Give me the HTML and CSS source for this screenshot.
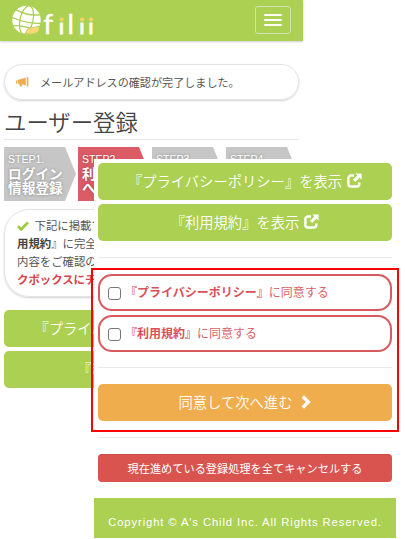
FILE: index.html
```html
<!DOCTYPE html>
<html lang="ja">
<head>
    <meta charset="UTF-8">
    <meta name="viewport" content="width=device-width, initial-scale=1.0">
    <title>ユーザー登録</title>
    <link rel="stylesheet" href="styles.css">
</head>
<body>
<!-- Shared icons -->
<svg class="icon-defs" width="0" height="0">
    <symbol id="icon-open" viewBox="0 0 16 16">
        <path d="M7.5 2.7H4.2A2.7 2.7 0 0 0 1.5 5.4v6.2a2.7 2.7 0 0 0 2.7 2.7h6.2a2.7 2.7 0 0 0 2.7-2.7V10" fill="none" stroke="currentColor" stroke-width="2.6"/>
        <path d="M8.8.4h6.8v6.8l-2.2-2.2-4.7 4.7-2.4-2.4L11 2.6z" fill="currentColor"/>
    </symbol>
</svg>

<div class="page">
    <header class="navbar">
        <svg class="logo" width="100" height="40" viewBox="0 0 100 40">
            <linearGradient id="dot" gradientUnits="userSpaceOnUse" x1="0" y1="0" x2="0" y2="40">
                <stop offset="0.54" stop-color="#fbd46d"/>
                <stop offset="0.54" stop-color="#fff"/>
            </linearGradient>
            <circle cx="26.500" cy="20" r="14.200" fill="#fff"/>
            <g fill="none" stroke="#abd052" stroke-width="1.3" transform="rotate(12 26.500 20)">
                <ellipse cx="26.500" cy="20" rx="6.500" ry="14.500"/>
                <path d="M14 12q12.500 4 25 0M12 20.500q14.500 3 29 0M14 28.500q12.500-3 25 0"/>
            </g>
            <path d="M25.500 33.200q1.500-5.500 7-5.700 3.500-.2 6-1.500 2.500 5-2.500 7.200-4.500 2-10.500 0z" fill="#fbd777" stroke="#abd052" stroke-width="0.8"/>
            <text class="logo-text" y="34"><tspan x="43.500">f</tspan><tspan class="dotted" x="58.800">i</tspan><tspan x="67.500">l</tspan><tspan class="dotted" x="79.300">i</tspan><tspan class="dotted" x="88.300">i</tspan></text>
        </svg>
        <button class="menu-button" aria-label="menu">
            <span></span>
            <span></span>
            <span></span>
        </button>
    </header>

    <main class="content">
        <div class="notice">
            <svg width="13" height="10" viewBox="0 0 13 10" fill="#f0ad4e">
                <path d="M0 3.500h1.200v3H0zM1.800 3 9.800.6v8L5.600 7.300l.6 2.200H4L3.200 6.800l-1.400-.3zM10.800 0h1.600v9.500h-1.600z"/>
            </svg>
            <span>メールアドレスの確認が完了しました。</span>
        </div>

        <h1>ユーザー登録</h1>

        <div class="steps">
            <div class="step"><small>STEP1.</small>ログイン<br>情報登録</div>
            <div class="step active"><small>STEP2.</small>利<br>へ</div>
            <div class="step"><small>STEP3</small></div>
            <div class="step"><small>STEP4</small></div>
        </div>

        <div class="guide">
            <svg width="12" height="10" viewBox="0 0 12 10">
                <path d="M1 5.200 4.300 8.400 11 1.400" fill="none" stroke="#9ccb3c" stroke-width="2.700"/>
            </svg>
            下記に掲載て<br>
            <b>用規約</b>』に完全<br>
            内容をご確認の<br>
            <b class="red">クボックスにチ</b>
        </div>

        <a class="btn btn-green">『プライバシーポリシー』を表示 <svg><use href="#icon-open"/></svg></a>
        <a class="btn btn-green">『利用規約』を表示 <svg><use href="#icon-open"/></svg></a>
    </main>
</div>

<!-- Lower part of the form, lies over the page -->
<div class="sheet">
    <a class="btn btn-green">『プライバシーポリシー』を表示 <svg><use href="#icon-open"/></svg></a>
    <a class="btn btn-green">『利用規約』を表示 <svg><use href="#icon-open"/></svg></a>
    <hr>
    <label class="agree"><input type="checkbox"><span><b>『プライバシーポリシー』</b>に同意する</span></label>
    <label class="agree"><input type="checkbox"><span><b>『利用規約』</b>に同意する</span></label>
    <hr>
    <a class="btn btn-orange">同意して次へ進む
        <svg class="chevron" viewBox="0 0 10 14"><path d="M1.800 1.500 7.300 7l-5.500 5.500" fill="none" stroke="#fff" stroke-width="3.400"/></svg>
    </a>
    <hr>
    <a class="btn btn-red">現在進めている登録処理を全てキャンセルする</a>
    <footer>Copyright © A's Child Inc. All Rights Reserved.</footer>
</div>

<div class="highlight"></div>
</body>
</html>
```
FILE: styles.css
```css
* {
    box-sizing: border-box;
}

body {
    margin: 0;
    height: 539px;
    position: relative;
    overflow: hidden;
    background: #fff;
    color: #555;
    font-family: "Noto Sans CJK JP", sans-serif;
    font-weight: 350;
}

.icon-defs {
    position: absolute;
}

.page {
    width: 303px;
}

/* Header */
.navbar {
    display: flex;
    justify-content: space-between;
    height: 41px;
    padding-right: 12px;
    background: #abd052;
    box-shadow: 0 1px 2px rgba(0, 0, 0, 0.2);
}

.logo-text {
    font-family: Lato, sans-serif;
    font-size: 27px;
    font-weight: 400;
    fill: #fff;
    stroke: #fff;
    stroke-width: 0.6;
}

.logo-text .dotted {
    font-size: 22px;
    fill: url(#dot);
    stroke: url(#dot);
    stroke-width: 1;
}

.menu-button {
    display: flex;
    flex-direction: column;
    align-items: center;
    justify-content: center;
    gap: 3px;
    width: 36px;
    height: 28px;
    margin-top: 6px;
    padding: 0;
    background: none;
    border: 1px solid #d3dfb4;
    border-radius: 3px;
}

.menu-button span {
    width: 18px;
    height: 2px;
    border-radius: 1px;
    background: #fff;
}

/* Page content */
.content {
    padding: 23px 4px 0;
}

.notice {
    display: flex;
    align-items: center;
    gap: 11px;
    height: 36px;
    padding-left: 11px;
    border: 1px solid #e3e3e3;
    border-radius: 18px;
    box-shadow: 0 1px 2px rgba(0, 0, 0, 0.18);
    font-size: 11.1px;
    font-weight: 400;
}

.notice span {
    padding-bottom: 1px;
}

h1 {
    height: 40px;
    margin: 0 0 7px;
    border-bottom: 1px solid #e8e8e8;
    color: #444;
    font-size: 22.4px;
    font-weight: 350;
    line-height: 43px;
}

.steps {
    display: flex;
    gap: 2px;
}

.step {
    flex: none;
    width: 72px;
    height: 54px;
    padding: 5px 0 0 4px;
    background: #c6c6c6;
    clip-path: polygon(0 0, 61px 0, 100% 50%, 61px 100%, 0 100%);
    color: #fff;
    font-size: 13.7px;
    font-weight: 700;
    line-height: 14px;
    text-shadow: 0 0 3px rgba(0, 0, 0, 0.35);
    white-space: nowrap;
}

.step small {
    display: block;
    font-family: "Liberation Sans", sans-serif;
    font-size: 10.5px;
    font-weight: 400;
}

.step.active {
    background: #dc5c66;
}

.guide {
    height: 88px;
    margin: 8px 0 13px;
    padding: 7px 12px;
    border: 1px solid #e3e3e3;
    border-radius: 25px;
    box-shadow: 0 1px 2px rgba(0, 0, 0, 0.18);
    font-size: 11.4px;
    font-weight: 400;
    line-height: 17.9px;
}

.guide svg {
    margin-right: 3px;
    vertical-align: -1px;
}

.guide b {
    color: #444;
}

.guide b.red {
    color: #d9434e;
}

/* Buttons */
.btn {
    display: flex;
    align-items: center;
    justify-content: center;
    gap: 5px;
    height: 37px;
    margin-bottom: 4px;
    padding-bottom: 2px;
    border-radius: 5px;
    color: #fff;
    font-size: 14.3px;
}

.btn svg {
    width: 15px;
    height: 15px;
}

.btn-green {
    background: #abd052;
}

.btn-orange {
    background: #f0ad4e;
}

.btn-orange .chevron {
    width: 10px;
    height: 14px;
    margin-left: 4px;
}

.btn-red {
    height: 28px;
    margin-bottom: 16px;
    background: #d9534f;
    border-top: 1px solid #cc4b48;
    border-radius: 4px;
    font-size: 11.2px;
    font-weight: 400;
}

.sheet {
    position: absolute;
    top: 159px;
    left: 94px;
    width: 302px;
    padding: 4px 4px 0;
    background: #fff;
}

.sheet hr {
    height: 1px;
    margin: 16px 0;
    border: 0;
    background: #eaeaea;
}

.sheet .agree + hr {
    margin-top: 15px;
}

/* Consent rows */
.agree {
    display: flex;
    align-items: center;
    height: 37px;
    margin-bottom: 4px;
    padding-left: 8px;
    border: 2px solid #d9595f;
    border-radius: 14px;
    color: #dc6068;
    font-size: 12px;
    font-weight: 400;
}

.agree span {
    padding-bottom: 2px;
}

.agree b {
    color: #d9505a;
}

.agree input {
    appearance: none;
    width: 13px;
    height: 13px;
    margin: 2px 4px 0 0;
    border: 1px solid #777;
    border-radius: 3px;
    background: #fff;
}

footer {
    height: 40px;
    margin: 0 -4px;
    background: #abd052;
    color: #fff;
    font-family: "Liberation Sans", sans-serif;
    font-size: 11.3px;
    font-weight: 400;
    letter-spacing: 0.87px;
    line-height: 48px;
    text-align: center;
    white-space: nowrap;
}

/* Red frame round the consent block */
.highlight {
    position: absolute;
    top: 268px;
    left: 91px;
    width: 308px;
    height: 164px;
    border: 2px solid #f00;
}
```
